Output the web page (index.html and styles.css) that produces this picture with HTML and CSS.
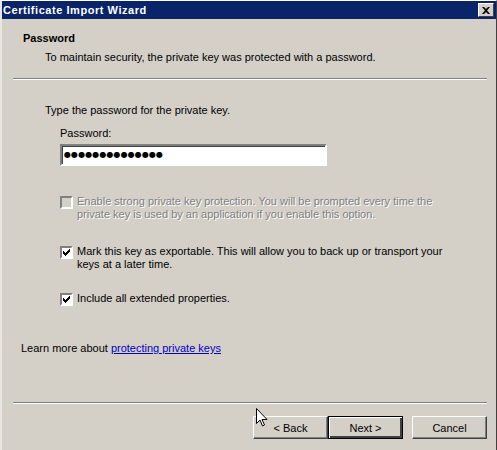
FILE: index.html
```html
<!DOCTYPE html>
<html>
<head>
<meta charset="utf-8">
<link rel="stylesheet" href="styles.css">
</head>
<body>
<div class="window">
  <div class="titlebar">
    <span class="title">Certificate Import Wizard</span>
    <span class="close"><svg width="8" height="7" viewBox="0 0 8 7"><path d="M0 0h2l2 2 2-2h2L5 3.5 8 7H6L4 5 2 7H0l3-3.5z" fill="#000"/></svg></span>
  </div>
  <div class="header">
    <div class="h-title">Password</div>
    <div class="h-sub">To maintain security, the private key was protected with a password.</div>
  </div>
  <div class="sep"></div>
  <div class="content">
    <div class="prompt">Type the password for the private key.</div>
    <div class="field">
      <div class="label">Password:</div>
      <div class="input"><span class="dots">●●●●●●●●●●●●●●</span></div>
    </div>
    <div class="options">
      <div class="opt disabled">
        <span class="cb"></span>
        <span class="opt-text">Enable strong private key protection. You will be prompted every time the<br>private key is used by an application if you enable this option.</span>
      </div>
      <div class="opt opt2">
        <span class="cb checked"><svg width="7" height="7" viewBox="0 0 7 7"><path d="M0 2h1v1h1v1h1V3h1V2h1V1h1V0h1v3H6v1H5v1H4v1H3v1H2V6H1V5H0z" fill="#000"/></svg></span>
        <span class="opt-text">Mark this key as exportable. This will allow you to back up or transport your<br>keys at a later time.</span>
      </div>
      <div class="opt opt3">
        <span class="cb checked"><svg width="7" height="7" viewBox="0 0 7 7"><path d="M0 2h1v1h1v1h1V3h1V2h1V1h1V0h1v3H6v1H5v1H4v1H3v1H2V6H1V5H0z" fill="#000"/></svg></span>
        <span class="opt-text">Include all extended properties.</span>
      </div>
    </div>
  </div>
  <div class="learn">Learn more about <a class="link" href="#">protecting private keys</a></div>
  <div class="sep"></div>
  <div class="buttons">
    <span class="btn">&lt; Back</span>
    <span class="btn default">Next &gt;</span>
    <span class="btn cancel">Cancel</span>
  </div>
  <svg class="cursor" width="12" height="19" viewBox="0 0 12 19"><path d="M0.5 0.5v15l3.5-3.5 2.5 6 2-1-2.5-5.5h5z" fill="#fff" stroke="#000" stroke-width="1"/></svg>
</div>
</body>
</html>
```
FILE: styles.css
```css
* { box-sizing: border-box; }
html, body { margin: 0; padding: 0; }
body { width: 497px; height: 450px; overflow: hidden; background: #d4d0c8; font-family: "Liberation Sans", Arial, sans-serif; font-size: 11px; color: #000; }
.window { position: relative; width: 497px; height: 450px; background: #d4d0c8; border-top: 1px solid #fff; border-left: 2px solid #e8e6e0; border-right: 1px solid #404040; }
.titlebar { height: 18px; background: #0a246a; display: flex; align-items: center; justify-content: space-between; padding: 0 2px 0 1px; }
.title { color: #fff; font-weight: bold; font-size: 11px; letter-spacing: 0.55px; }
.close { width: 16px; height: 14px; background: #d4d0c8; border: 1px solid; border-color: #fff #404040 #404040 #fff; display: flex; align-items: center; justify-content: center; }
.header { padding: 13px 0 0 21px; height: 59px; }
.h-title { font-weight: bold; line-height: 13px; }
.h-sub { margin: 6px 0 0 22px; line-height: 13px; }
.sep { margin: 0 9px 0 11px; height: 2px; border-top: 1px solid #808080; border-bottom: 1px solid #fff; }
.content { padding: 24px 0 0 43px; height: 262px; }
.prompt { line-height: 13px; }
.field { margin: 10px 0 0 15px; }
.label { line-height: 13px; }
.input { margin-top: 4px; width: 267px; height: 22px; background: #fff; border: 2px solid; border-color: #808080 #fff #fff #808080; box-shadow: inset 1px 1px 0 #404040; display: flex; align-items: center; padding-left: 2px; }
.dots { font-family: "DejaVu Sans", sans-serif; font-size: 8px; letter-spacing: 0.1px; line-height: 12px; }
.options { margin: 29px 0 0 15px; display: flex; flex-direction: column; }
.opt { display: flex; gap: 4px; }
.opt2 { margin-top: 24px; }
.opt3 { margin-top: 21px; }
.cb { flex: none; width: 13px; height: 13px; background: #fff; border: 2px solid; border-color: #808080 #fff #fff #808080; display: flex; align-items: center; justify-content: center; margin-top: 1px; }
.opt-text { line-height: 13px; }
.disabled .opt-text { color: #808080; text-shadow: 1px 1px 0 #fff; }
.disabled .cb { background: #d4d0c8; }
.learn { padding-left: 19px; line-height: 13px; height: 60px; }
.link { color: #0000c0; text-decoration: underline; }
.buttons { display: flex; justify-content: flex-end; padding: 12px 9px 0 0; }
.btn { width: 75px; height: 23px; display: flex; align-items: center; justify-content: center; background: #d4d0c8; border: 1px solid; border-color: #fff #404040 #404040 #fff; box-shadow: inset -1px -1px 0 #808080; }
.btn.default { border: 1px solid #000; box-shadow: inset 1px 1px 0 #fff, inset -2px -2px 0 #404040, inset -1px -1px 0 #808080; }
.btn.cancel { margin-left: 9px; }
.cursor { position: absolute; left: 254px; top: 407px; }
```
